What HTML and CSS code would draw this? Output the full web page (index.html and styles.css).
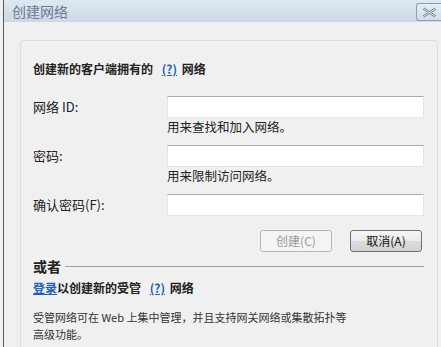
FILE: index.html
```html
<!DOCTYPE html>
<html lang="zh-CN">
<head>
<meta charset="utf-8">
<title>创建网络</title>
<link rel="stylesheet" href="styles.css">
</head>
<body>
<div class="window">
  <div class="titlebar">
    <span class="title">创建网络</span>
    <span class="close">
      <svg width="15" height="11" viewBox="0 0 15 11"><path d="M1.5 1.5 L13.5 9.5 M13.5 1.5 L1.5 9.5" stroke="#6f7f92" stroke-width="2.6" fill="none"/><path d="M1.5 1.5 L13.5 9.5 M13.5 1.5 L1.5 9.5" stroke="#eef2f6" stroke-width="1" fill="none"/></svg>
    </span>
  </div>
  <div class="content">
    <div class="panel">
      <div class="heading">创建新的客户端拥有的 <a class="help">(?)</a> 网络</div>
      <div class="form">
        <div class="label">网络 ID:</div>
        <div class="field"><div class="input"></div><div class="hint">用来查找和加入网络。</div></div>
        <div class="label">密码:</div>
        <div class="field"><div class="input"></div><div class="hint">用来限制访问网络。</div></div>
        <div class="label">确认密码(F):</div>
        <div class="field"><div class="input"></div></div>
      </div>
      <div class="buttons">
        <span class="btn disabled">创建(C)</span>
        <span class="btn">取消(A)</span>
      </div>
      <div class="or"><span>或者</span><span class="rule"></span></div>
      <div class="login"><a class="link">登录</a>以创建新的受管 <a class="help">(?)</a> 网络</div>
      <p class="desc">受管网络可在 Web 上集中管理，并且支持网关网络或集散拓扑等<br>高级功能。</p>
    </div>
  </div>
</div>
</body>
</html>
```
FILE: styles.css
```css
html, body {
  margin: 0;
  padding: 0;
  height: 100%;
  overflow: hidden;
  background: #f0f0f0;
  font-family: "Noto Sans CJK SC", "Noto Sans", sans-serif;
  color: #222;
}
.window {
  margin-left: 3px;
  height: 100%;
  border-left: 1px solid #5a5a5a;
  display: flex;
  flex-direction: column;
}
.titlebar {
  height: 22px;
  flex: none;
  background: linear-gradient(#dfe8f1, #cbd8e6);
  display: flex;
  align-items: flex-start;
  justify-content: space-between;
}
.title {
  margin-left: 8px;
  font-size: 14px;
  line-height: 22px;
  color: #6b7b8d;
}
.close {
  margin-top: 3px;
  width: 24px;
  height: 16px;
  border: 1px solid #8e9db0;
  border-right: none;
  border-radius: 3px 0 0 3px;
  background: linear-gradient(#e6edf4, #d3dde8);
  display: flex;
  align-items: center;
  justify-content: center;
}
.content {
  flex: 1;
  padding: 18px 3px 0 16px;
  display: flex;
  flex-direction: column;
}
.panel {
  flex: 1;
  border: 1px solid #dcdcdc;
  border-bottom: none;
  border-radius: 4px 4px 0 0;
  padding: 20px 12px 0 12px;
}
.heading {
  font-size: 12px;
  font-weight: bold;
  line-height: 16px;
  color: #222;
}
.help {
  color: #1f5fb4;
  text-decoration: underline;
  margin: 0 2px 0 6px;
}
.form {
  margin-top: 19px;
  display: grid;
  grid-template-columns: 134px 257px;
  row-gap: 10px;
}
.label {
  font-size: 13px;
  height: 22px;
  line-height: 22px;
  color: #222;
}
.input {
  height: 20px;
  background: #fff;
  border: 1px solid #e2e6ea;
  border-top-color: #ababab;
}
.hint {
  font-size: 12.5px;
  line-height: 16px;
  margin-top: 1px;
  color: #222;
}
.buttons {
  margin-top: 14px;
  display: flex;
  justify-content: flex-end;
  gap: 18px;
  padding-right: 3px;
}
.btn {
  width: 70px;
  height: 20px;
  border: 1px solid #707070;
  border-radius: 3px;
  background: linear-gradient(#f6f6f6 0%, #ebebeb 50%, #dcdcdc 51%, #d2d2d2 100%);
  font-size: 12px;
  line-height: 20px;
  text-align: center;
  color: #111;
}
.btn.disabled {
  border-color: #b5b5b5;
  background: #f4f4f4;
  color: #9a9a9a;
}
.or {
  margin-top: 6px;
  display: flex;
  align-items: center;
  gap: 4px;
  font-size: 14px;
  font-weight: bold;
  line-height: 16px;
}
.rule {
  flex: 1;
  height: 1px;
  background: #a0a0a0;
  margin-right: 1px;
}
.login {
  margin-top: 6px;
  font-size: 12px;
  font-weight: bold;
  line-height: 16px;
}
.link {
  color: #1f5fb4;
  text-decoration: underline;
}
.desc {
  margin: 13px 0 0 0;
  font-size: 11px;
  line-height: 17px;
  color: #333;
}
```
